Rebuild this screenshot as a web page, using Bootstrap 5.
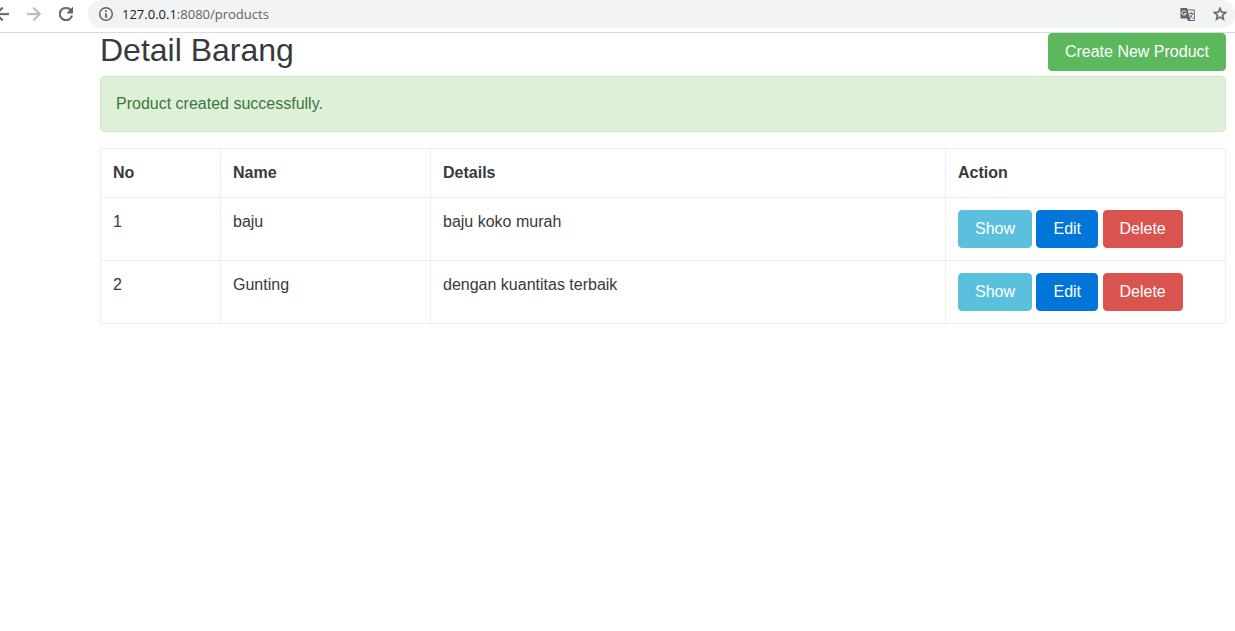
<!DOCTYPE html>
<html lang="id">
<head>
<meta charset="utf-8">
<meta name="viewport" content="width=device-width, initial-scale=1">
<title>Detail Barang</title>
<link href="https://cdn.jsdelivr.net/npm/bootstrap@5.3.0/dist/css/bootstrap.min.css" rel="stylesheet">
<style>
  body { font-family: "Liberation Sans", Arial, sans-serif; color: #373a3c; background: #fff; }
  svg { display: block; }

  /* Browser toolbar */
  .toolbar { height: 33px; border-bottom: 1px solid #dadce0; color: #5f6368; overflow: hidden; }
  .tool { padding: 0; border: 0; background: none; color: inherit; }
  .tool:disabled { color: #bababc; }
  .nav-tools { gap: 18px; height: 28px; margin-left: -5px; }
  .address { height: 28px; margin-left: 15px; padding: 0 8px 0 10px; background: #f1f3f4; font: 13px/20px "Open Sans", sans-serif; }
  .address .host { color: #202124; }
  .page-tools { gap: 18px; }

  /* Page */
  .page { padding: 0 9px 0 100px; }
  .page-title { font-size: 32px; line-height: 35px; font-weight: 400; }
  .page-head { min-height: 43px; }
  .btn { --bs-btn-border-radius: 4px; --bs-btn-padding-x: 16px; }
  .btn-success { --bs-btn-bg: #5cb85c; --bs-btn-border-color: #5cb85c; }
  .btn-info { --bs-btn-bg: #5bc0de; --bs-btn-border-color: #5bc0de; --bs-btn-color: #fff; }
  .btn-primary { --bs-btn-bg: #0275d8; --bs-btn-border-color: #0275d8; }
  .btn-danger { --bs-btn-bg: #d9534f; --bs-btn-border-color: #d9534f; }
  .alert-success { --bs-alert-bg: #dff0d8; --bs-alert-border-color: #d0e9c6; --bs-alert-color: #3c763d; --bs-alert-border-radius: 4px; padding: 15px; }
  .table { --bs-table-color: #373a3c; --bs-table-bg: #fff; border-color: #eceeef; table-layout: fixed; }
  .table > :not(caption) > * > * { padding: 12px; }
  .col-no { width: 120px; }
  .col-name { width: 210px; }
  .col-action { width: 280px; }
</style>
</head>
<body>
<header class="toolbar d-flex align-items-start">
  <nav class="nav-tools d-flex align-items-center flex-shrink-0" aria-label="Browser">
    <button class="tool" type="button" aria-label="Back"><svg width="14" height="14" viewBox="4 4 16 16" fill="currentColor" stroke="currentColor" stroke-width=".4"><path d="M20 11H7.830l5.590-5.590L12 4l-8 8 8 8 1.410-1.410L7.830 13H20z"/></svg></button>
    <button class="tool" type="button" aria-label="Forward" disabled><svg width="14" height="14" viewBox="4 4 16 16" fill="currentColor" stroke="currentColor" stroke-width=".4"><path d="M12 4l-1.410 1.410L16.170 11H4v2h12.170l-5.580 5.590L12 20l8-8z"/></svg></button>
    <button class="tool" type="button" aria-label="Reload"><svg width="14" height="14" viewBox="4 4 16 16" fill="currentColor" stroke="currentColor" stroke-width=".5"><path d="M17.650 6.350A7.960 7.960 0 0 0 12 4a8 8 0 1 0 7.730 10h-2.080A6 6 0 1 1 12 6c1.660 0 3.140.69 4.220 1.780L13 11h7V4z"/></svg></button>
  </nav>
  <div class="address d-flex align-items-center flex-grow-1 rounded-pill">
    <button class="tool me-2" type="button" aria-label="Site information"><svg width="16" height="16" viewBox="0 0 16 16"><circle cx="8" cy="8" r="6.300" fill="none" stroke="currentColor" stroke-width="1.500"/><path d="M7.100 4.300h1.800v1.800H7.100zM7.100 7.200h1.800v4.500H7.100z" fill="currentColor"/></svg></button>
    <div class="flex-grow-1" role="textbox" aria-label="Address"><span class="host">127.0.0.1</span>:8080/products</div>
    <div class="page-tools d-flex align-items-center">
      <button class="tool" type="button" aria-label="Translate"><svg width="15" height="15" viewBox="0 0 15 15"><path d="M7 3h7.300v10.500H8z" fill="#f1f3f4" stroke="currentColor"/><path d="M0.500 1H7l3 10.500H0.500zM7.500 11.500l1 2.500L11 11.500z" fill="currentColor"/><path d="M6 4.800A2.200 2.200 0 1 0 6.200 6.600H4.300" fill="none" stroke="#fff"/><path d="M9 6.500h4.500M11.300 5v1.500M12.500 6.500c-.4 2-1.500 3.300-2.700 4.200M10 8.300c.8 1.200 1.700 2.200 2.800 3" fill="none" stroke="currentColor" stroke-width=".9"/></svg></button>
      <button class="tool" type="button" aria-label="Bookmark"><svg width="14" height="14" viewBox="2 2 20 20" fill="currentColor" stroke="currentColor" stroke-width=".7"><path d="M22 9.240l-7.190-.62L12 2 9.190 8.630 2 9.240l5.460 4.730L5.820 21 12 17.270 18.180 21l-1.630-7.030zM12 15.400l-3.760 2.270 1-4.280-3.320-2.880 4.380-.38L12 6.100l1.710 4.040 4.380.38-3.320 2.880 1 4.280z"/></svg></button>
    </div>
  </div>
</header>

<main class="page">
  <div class="page-head d-flex justify-content-between align-items-start">
    <h2 class="page-title mb-0">Detail Barang</h2>
    <a class="btn btn-success" href="#create">Create New Product</a>
  </div>
  <div class="alert alert-success mb-3" role="alert">
    <p class="mb-0">Product created successfully.</p>
  </div>
  <table class="table table-bordered">
    <thead>
      <tr>
        <th class="col-no" scope="col">No</th>
        <th class="col-name" scope="col">Name</th>
        <th scope="col">Details</th>
        <th class="col-action" scope="col">Action</th>
      </tr>
    </thead>
    <tbody>
      <tr>
        <td>1</td>
        <td>baju</td>
        <td>baju koko murah</td>
        <td>
          <form>
            <a class="btn btn-info" href="#show-1">Show</a>
            <a class="btn btn-primary" href="#edit-1">Edit</a>
            <button class="btn btn-danger" type="button">Delete</button>
          </form>
        </td>
      </tr>
      <tr>
        <td>2</td>
        <td>Gunting</td>
        <td>dengan kuantitas terbaik</td>
        <td>
          <form>
            <a class="btn btn-info" href="#show-2">Show</a>
            <a class="btn btn-primary" href="#edit-2">Edit</a>
            <button class="btn btn-danger" type="button">Delete</button>
          </form>
        </td>
      </tr>
    </tbody>
  </table>
</main>
<script src="https://cdn.jsdelivr.net/npm/bootstrap@5.3.0/dist/js/bootstrap.bundle.min.js"></script>
</body>
</html>
